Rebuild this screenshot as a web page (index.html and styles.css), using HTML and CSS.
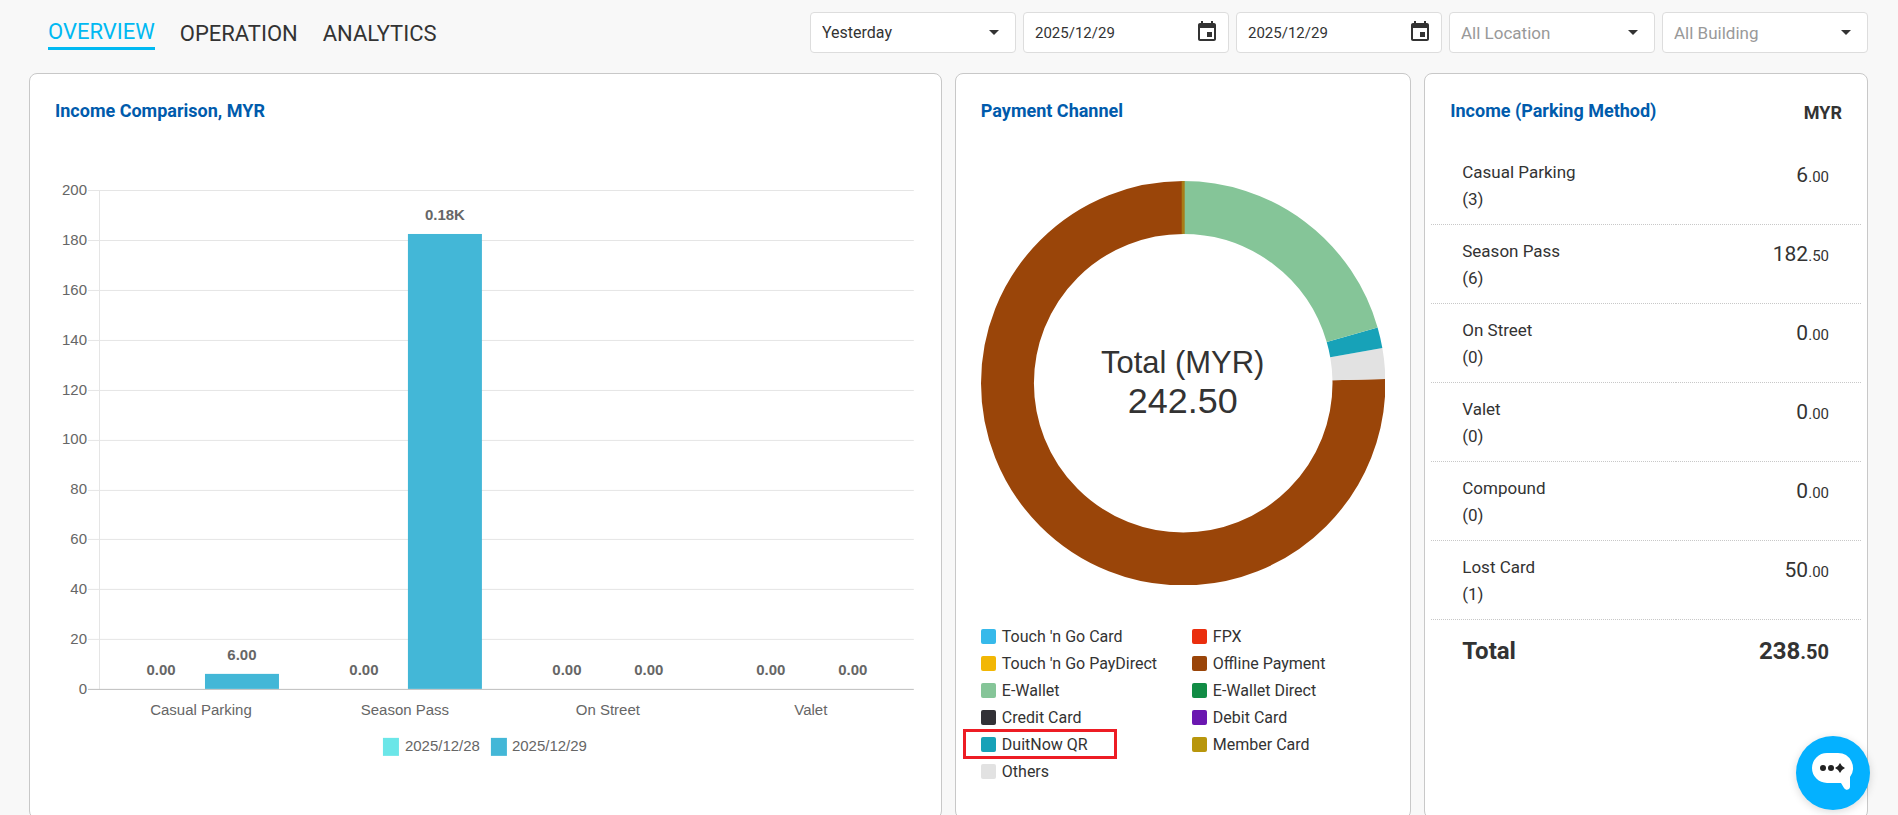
FILE: index.html
```html
<!DOCTYPE html>
<html lang="en">
<head>
  <meta charset="UTF-8">
  <meta name="viewport" content="width=device-width, initial-scale=1.0">
  <title>Parking Dashboard</title>
  <link rel="stylesheet" href="styles.css">
</head>
<body>

  <header class="topbar">
    <nav class="tabs">
      <a href="#overview" class="active">OVERVIEW</a>
      <a href="#operation">OPERATION</a>
      <a href="#analytics">ANALYTICS</a>
    </nav>
    <form class="filters">
      <div class="field">
        <select aria-label="Period">
          <option>Yesterday</option>
          <option>Today</option>
        </select>
        <svg class="icon" viewBox="0 0 24 24"><path d="M7 10l5 5 5-5z"/></svg>
      </div>
      <div class="field">
        <input type="text" aria-label="Start date" value="2025/12/29">
        <svg class="icon" viewBox="0 0 24 24"><path d="M17 12h-5v5h5v-5zM16 1v2H8V1H6v2H5c-1.11 0-1.99.9-1.99 2L3 19c0 1.1.89 2 2 2h14c1.1 0 2-.9 2-2V5c0-1.1-.9-2-2-2h-1V1h-2zm3 18H5V8h14v11z"/></svg>
      </div>
      <div class="field">
        <input type="text" aria-label="End date" value="2025/12/29">
        <svg class="icon" viewBox="0 0 24 24"><path d="M17 12h-5v5h5v-5zM16 1v2H8V1H6v2H5c-1.11 0-1.99.9-1.99 2L3 19c0 1.1.89 2 2 2h14c1.1 0 2-.9 2-2V5c0-1.1-.9-2-2-2h-1V1h-2zm3 18H5V8h14v11z"/></svg>
      </div>
      <div class="field">
        <select aria-label="Location" class="placeholder">
          <option>All Location</option>
        </select>
        <svg class="icon" viewBox="0 0 24 24"><path d="M7 10l5 5 5-5z"/></svg>
      </div>
      <div class="field">
        <select aria-label="Building" class="placeholder">
          <option>All Building</option>
        </select>
        <svg class="icon" viewBox="0 0 24 24"><path d="M7 10l5 5 5-5z"/></svg>
      </div>
    </form>
  </header>

  <main class="cards">

    <section class="card">
      <h2>Income Comparison, MYR</h2>
      <svg class="bar-chart" viewBox="0 0 861 640">
        <!-- grid -->
        <g class="grid">
          <path d="M33 65.5H859M33 115.5H859M33 165.5H859M33 215.5H859M33 265.5H859M33 315.5H859M33 365.5H859M33 414.5H859M33 464.5H859M33 514.5H859M44.5 65V564"/>
          <path class="base" d="M33 564.5H859"/>
        </g>
        <g class="y-axis">
          <text x="32" y="70">200</text>
          <text x="32" y="120">180</text>
          <text x="32" y="170">160</text>
          <text x="32" y="220">140</text>
          <text x="32" y="270">120</text>
          <text x="32" y="319">100</text>
          <text x="32" y="369">80</text>
          <text x="32" y="419">60</text>
          <text x="32" y="469">40</text>
          <text x="32" y="519">20</text>
          <text x="32" y="569">0</text>
        </g>
        <!-- bars -->
        <rect class="bar" x="150" y="549" width="74" height="15"/>
        <rect class="bar" x="353" y="109" width="74" height="455"/>
        <g class="values">
          <text x="106" y="550">0.00</text>
          <text x="187" y="535">6.00</text>
          <text x="309" y="550">0.00</text>
          <text x="390" y="95">0.18K</text>
          <text x="512" y="550">0.00</text>
          <text x="594" y="550">0.00</text>
          <text x="716" y="550">0.00</text>
          <text x="798" y="550">0.00</text>
        </g>
        <g class="x-axis">
          <text x="146" y="590">Casual Parking</text>
          <text x="350" y="590">Season Pass</text>
          <text x="553" y="590">On Street</text>
          <text x="756" y="590">Valet</text>
        </g>
        <!-- legend -->
        <g class="chart-legend">
          <rect x="328" y="613" width="16" height="18" fill="#6be6e8"/>
          <text x="350" y="626">2025/12/28</text>
          <rect x="436" y="613" width="16" height="18" fill="#43b7d7"/>
          <text x="457" y="626">2025/12/29</text>
        </g>
      </svg>
    </section>

    <section class="card">
      <h2>Payment Channel</h2>
      <!-- each slice is a dash on a 360 unit long circle -->
      <svg class="donut" viewBox="0 0 405 405">
        <g class="slices" transform="rotate(-90 202.5 202.5)">
          <circle cx="202.5" cy="202.5" r="176" pathLength="360" stroke="#9a4509" stroke-dasharray="271.2 360" stroke-dashoffset="-88.8"/>
          <circle cx="202.5" cy="202.5" r="176" pathLength="360" stroke="#e2e2e2" stroke-dasharray="8.8 360" stroke-dashoffset="-80"/>
          <circle cx="202.5" cy="202.5" r="176" pathLength="360" stroke="#17a2b8" stroke-dasharray="6 360" stroke-dashoffset="-74"/>
          <circle cx="202.5" cy="202.5" r="176" pathLength="360" stroke="#85c598" stroke-dasharray="74 360"/>
        </g>
        <path d="M202.5 0v53" stroke="#a87d17" stroke-width="3"/>
        <text class="donut-label" x="202" y="192">Total (MYR)</text>
        <text class="donut-value" x="202" y="232">242.50</text>
      </svg>
      <ul class="channels">
        <li><i class="swatch tng"></i>Touch 'n Go Card</li>
        <li><i class="swatch fpx"></i>FPX</li>
        <li><i class="swatch paydirect"></i>Touch 'n Go PayDirect</li>
        <li><i class="swatch offline"></i>Offline Payment</li>
        <li><i class="swatch ewallet"></i>E-Wallet</li>
        <li><i class="swatch ewallet-direct"></i>E-Wallet Direct</li>
        <li><i class="swatch credit"></i>Credit Card</li>
        <li><i class="swatch debit"></i>Debit Card</li>
        <li class="marked"><i class="swatch duitnow"></i>DuitNow QR</li>
        <li><i class="swatch member"></i>Member Card</li>
        <li><i class="swatch others"></i>Others</li>
      </ul>
    </section>

    <section class="card income">
      <div class="income-head">
        <h2>Income (Parking Method)</h2>
        <span class="currency">MYR</span>
      </div>
      <table>
        <tbody>
          <tr>
            <th scope="row">Casual Parking<br>(3)</th>
            <td>6<small>.00</small></td>
          </tr>
          <tr>
            <th scope="row">Season Pass<br>(6)</th>
            <td>182<small>.50</small></td>
          </tr>
          <tr>
            <th scope="row">On Street<br>(0)</th>
            <td>0<small>.00</small></td>
          </tr>
          <tr>
            <th scope="row">Valet<br>(0)</th>
            <td>0<small>.00</small></td>
          </tr>
          <tr>
            <th scope="row">Compound<br>(0)</th>
            <td>0<small>.00</small></td>
          </tr>
          <tr>
            <th scope="row">Lost Card<br>(1)</th>
            <td>50<small>.00</small></td>
          </tr>
        </tbody>
        <tfoot>
          <tr>
            <th scope="row">Total</th>
            <td>238<small>.50</small></td>
          </tr>
        </tfoot>
      </table>
    </section>

  </main>

  <button type="button" class="chat" aria-label="Chat">
    <svg viewBox="0 0 74 74">
      <path fill="#fff" d="M31 17h11a15 15 0 0 1 12 24v10c-.5 3-4 4-6 1l-3-5H31a15 15 0 0 1 0-30z"/>
      <circle cx="27" cy="32" r="3" fill="#222"/>
      <circle cx="35" cy="32" r="3" fill="#222"/>
      <path fill="#222" d="M44 27q1.500 3.500 5 5q-3.500 1.500-5 5q-1.500-3.500-5-5q3.500-1.500 5-5z"/>
    </svg>
  </button>

</body>
</html>
```

FILE: styles.css
```css
* {
  box-sizing: border-box;
}

body {
  margin: 0;
  padding: 0 30px 20px 29px;
  font-family: Roboto, "Liberation Sans", sans-serif;
  font-size: 16px;
  color: #333;
  background-color: #f8f8f8;
}

.topbar {
  display: flex;
  justify-content: space-between;
  align-items: center;
  padding: 12px 0 20px 19px;
}

.tabs {
  display: flex;
  align-items: center;
  gap: 25px;
  padding-top: 3px;
}

.tabs a {
  font-size: 22px;
  line-height: 28px;
  color: #333;
  text-decoration: none;
}

.tabs a.active {
  color: #00b9f2;
  padding-bottom: 1px;
  border-bottom: 3px solid #00b9f2;
}

.filters {
  display: flex;
  gap: 7px;
}

.field {
  position: relative;
  width: 206px;
}

.field select,
.field input {
  display: block;
  width: 100%;
  height: 41px;
  padding: 0 40px 0 11px;
  border: 1px solid #ddd;
  border-radius: 4px;
  background-color: #fff;
  font: inherit;
  color: #333;
  appearance: none;
}

.field input {
  font-size: 15px;
}

.field select.placeholder {
  font-size: 17px;
  color: #999;
}

.field .icon {
  position: absolute;
  top: 8px;
  right: 10px;
  width: 24px;
  height: 24px;
  fill: #333;
  pointer-events: none;
}

.cards {
  display: grid;
  grid-template-columns: 72fr 36fr 35fr;
  gap: 13px;
}

.card {
  padding: 23px 25px 33px;
  border: 1px solid #c8c8c8;
  border-radius: 8px;
  background-color: #fff;
}

.card h2 {
  margin: 0;
  font-size: 18px;
  font-weight: 700;
  line-height: 28px;
  color: #005bac;
}

.bar-chart,
.donut {
  display: block;
  width: 100%;
}

.bar-chart text {
  font-family: "Liberation Sans", Arial, sans-serif;
  font-size: 15px;
  fill: #666;
}

.grid path {
  fill: none;
  stroke: #e5e5e5;
}

.grid .base {
  stroke: #bdbdbd;
}

.bar {
  fill: #43b7d7;
}

.y-axis {
  text-anchor: end;
}

.x-axis,
.values {
  text-anchor: middle;
}

.values {
  font-weight: bold;
}

.donut {
  margin: 56px 0 38px;
}

.slices circle {
  fill: none;
  stroke-width: 53px;
}

.donut text {
  font-family: "Liberation Sans", Arial, sans-serif;
  fill: #333;
  text-anchor: middle;
}

.donut-label {
  font-size: 31px;
}

.donut-value {
  font-size: 36px;
}

.channels {
  display: grid;
  grid-template-columns: 211px 1fr;
  margin: 0;
  padding: 0;
  list-style: none;
}

.channels li {
  position: relative;
  display: flex;
  align-items: center;
  gap: 6px;
  line-height: 27px;
}

/* red frame around the highlighted channel */
.channels .marked::after {
  content: "";
  position: absolute;
  top: -2px;
  left: -18px;
  box-sizing: border-box;
  width: 154px;
  height: 30px;
  border: 3px solid #ed1c24;
}

.swatch {
  width: 15px;
  height: 15px;
  border-radius: 2px;
}

.tng { background-color: #36b9ea; }
.fpx { background-color: #ea2e0e; }
.paydirect { background-color: #f2b705; }
.offline { background-color: #9a4509; }
.ewallet { background-color: #85c598; }
.ewallet-direct { background-color: #118c45; }
.credit { background-color: #323136; }
.debit { background-color: #6a17b0; }
.duitnow { background-color: #17a2b8; }
.member { background-color: #b8960c; }
.others { background-color: #e2e2e2; }

.card.income {
  padding-left: 6px;
  padding-right: 6px;
}

.income-head {
  display: flex;
  justify-content: space-between;
  padding: 0 19px;
  margin-bottom: 17px;
}

.currency {
  font-size: 18px;
  font-weight: 700;
  line-height: 32px;
}

.income table {
  width: 100%;
  border-collapse: separate;
  border-spacing: 0;
}

.income th,
.income td {
  padding: 13px 32px 11px 31px;
  vertical-align: top;
  font-weight: 400;
  border-bottom: 1px dotted #c8c8c8;
}

.income th {
  font-size: 17px;
  line-height: 27px;
  text-align: left;
}

.income td {
  font-size: 21px;
  line-height: 32px;
  text-align: right;
}

.income td small {
  font-size: 15px;
}

.income tfoot th,
.income tfoot td {
  font-size: 24px;
  font-weight: 700;
  line-height: 36px;
  border-bottom: none;
}

.income tfoot small {
  font-size: 20px;
}

.chat {
  position: fixed;
  right: 28px;
  bottom: 5px;
  width: 74px;
  height: 74px;
  padding: 0;
  border: none;
  border-radius: 50%;
  background-color: #04b1ff;
  box-shadow: 0 2px 8px rgba(0, 0, 0, 0.15);
  cursor: pointer;
}

.chat svg {
  display: block;
}
```
